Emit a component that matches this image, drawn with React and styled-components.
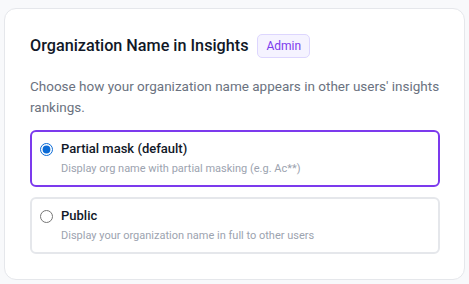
import React, { useState } from "react";
import styled, { createGlobalStyle } from "styled-components";

const GlobalStyle = createGlobalStyle`
  html, body {
    margin: 0;
    background: #f8f9fb;
    font-family: Roboto, "Open Sans", sans-serif;
  }
`;

const Page = styled.div`
  padding: 8px 4px 4px 4px;
`;

const Card = styled.div`
  background: #ffffff;
  border: 1px solid #e5e7eb;
  border-radius: 12px;
  padding: 25px 24px 25px 25px;
`;

const Header = styled.div`
  display: flex;
  align-items: center;
  gap: 9px;
`;

const Title = styled.h2`
  margin: 0;
  font-size: 16.2px;
  line-height: 24px;
  font-weight: 500;
  color: #111827;
`;

const Badge = styled.span`
  font-size: 12px;
  line-height: 14px;
  font-weight: 400;
  color: #7c3aed;
  background: #f5f3ff;
  border: 1px solid #ddd6fe;
  border-radius: 5px;
  padding: 4px 8px;
`;

const Description = styled.p`
  margin: 18px 0 12px;
  font-size: 13.5px;
  line-height: 21px;
  color: #6b7280;
`;

const Options = styled.div`
  display: flex;
  flex-direction: column;
  gap: 10px;
`;

const Option = styled.label`
  display: flex;
  gap: 8px;
  padding: 8px 12px 8px 8px;
  border: 2px solid ${(p) => (p.$active ? "#7c3aed" : "#e5e7eb")};
  border-radius: 6px;
  cursor: pointer;
`;

const Radio = styled.input`
  margin: 3px 0 0;
  width: 13px;
  height: 13px;
  accent-color: #0b6bd6;
`;

const Texts = styled.div`
  display: flex;
  flex-direction: column;
  gap: 3px;
`;

const Label = styled.span`
  font-size: 13px;
  line-height: 18px;
  font-weight: 500;
  color: #111827;
`;

const Hint = styled.span`
  font-size: 11px;
  line-height: 16px;
  color: #9ca3af;
`;

const options = [
  { id: "partial", label: "Partial mask (default)", hint: "Display org name with partial masking (e.g. Ac**)" },
  { id: "public", label: "Public", hint: "Display your organization name in full to other users" },
];

export default function App() {
  const [value, setValue] = useState("partial");
  return (
    <>
      <GlobalStyle />
      <Page>
        <Card>
          <Header>
            <Title>Organization Name in Insights</Title>
            <Badge>Admin</Badge>
          </Header>
          <Description>
            Choose how your organization name appears in other users' insights rankings.
          </Description>
          <Options>
            {options.map((o) => (
              <Option key={o.id} $active={value === o.id}>
                <Radio
                  type="radio"
                  name="orgname"
                  checked={value === o.id}
                  onChange={() => setValue(o.id)}
                />
                <Texts>
                  <Label>{o.label}</Label>
                  <Hint>{o.hint}</Hint>
                </Texts>
              </Option>
            ))}
          </Options>
        </Card>
      </Page>
    </>
  );
}
